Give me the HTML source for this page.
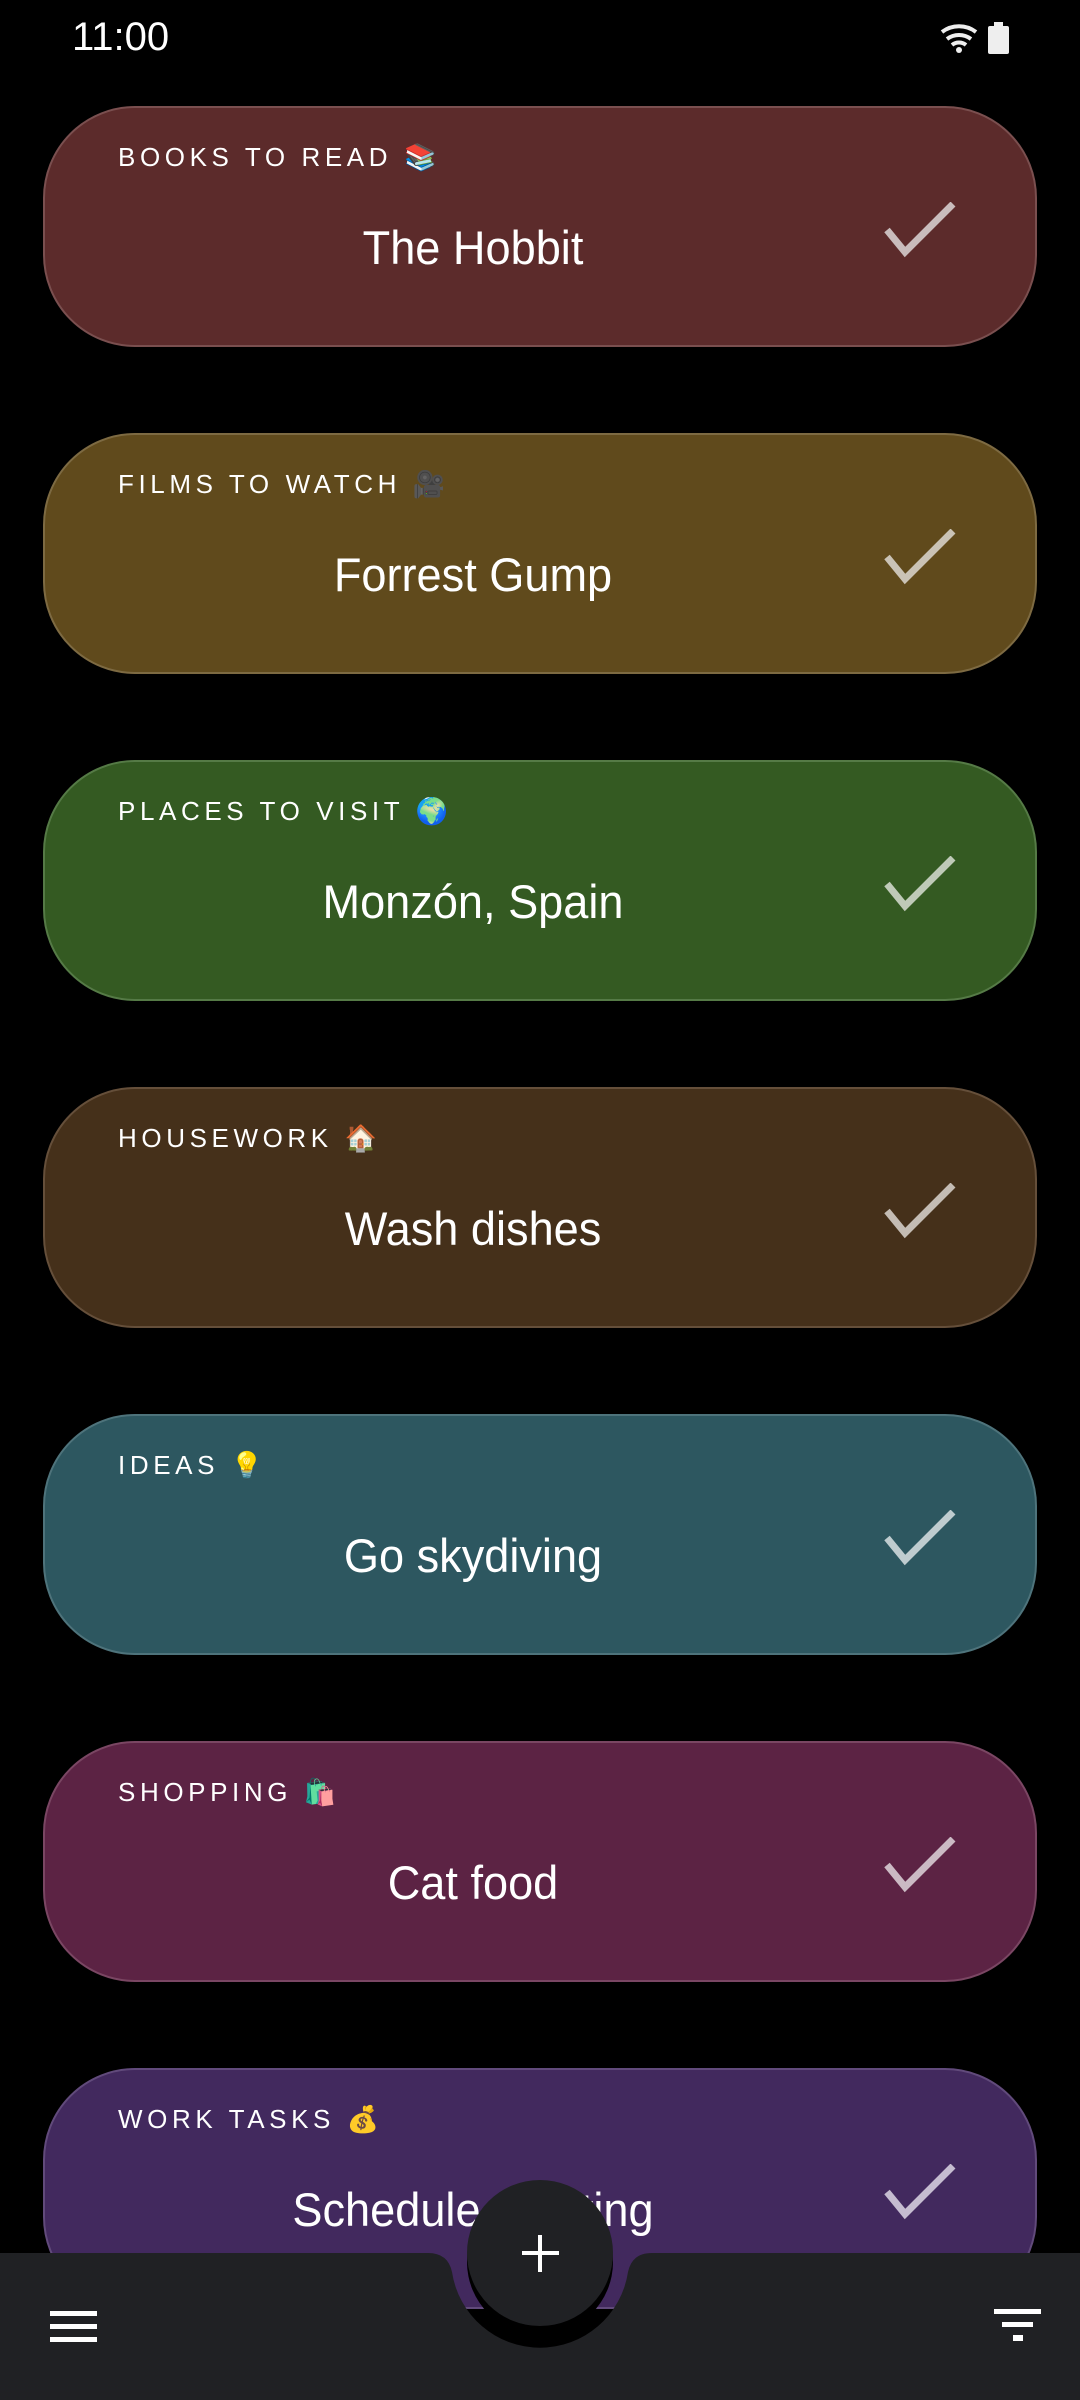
<!DOCTYPE html>
<html><head><meta charset="utf-8"><style>
html,body{margin:0;padding:0;background:#000;width:1080px;height:2400px;overflow:hidden;font-family:"Liberation Sans","Noto Sans CJK JP",sans-serif;}
.card{position:absolute;left:43px;width:994px;height:241px;border-radius:92px;box-sizing:border-box;border:2px solid;}
.lbl{position:absolute;left:73px;top:34px;font-size:26px;letter-spacing:4.6px;color:#fff;white-space:nowrap;}
.ttl{position:absolute;left:0;width:856px;text-align:center;top:112px;font-size:47px;color:#fff;white-space:nowrap;transform:scaleX(0.96);}
.chk{position:absolute;left:838px;top:94px;}
</style></head><body>
<div style="position:absolute;left:72px;top:15px;font-size:40px;color:#fff;">11:00</div>
<svg style="position:absolute;left:938px;top:20px" width="80" height="38" viewBox="0 0 80 38">
<path d="M4 12 A28 28 0 0 1 38 12" stroke="#eee" stroke-width="4" fill="none"/>
<path d="M9 19 A20 20 0 0 1 33 19" stroke="#eee" stroke-width="4" fill="none"/>
<path d="M14 25 A11 11 0 0 1 28 25" stroke="#eee" stroke-width="4" fill="none"/>
<circle cx="21" cy="30" r="3" fill="#eee"/>
<rect x="50" y="6" width="21" height="28" rx="2" fill="#eee"/><rect x="56" y="2" width="9" height="5" fill="#eee"/>
</svg>

<div class="card" style="top:106px;background:#5c2b2b;border-color:#7a4f4f"><div class="lbl">BOOKS TO READ 📚</div><div class="ttl">The Hobbit</div><svg class="chk" width="80" height="60"><path d="M4 28 L22 50 L70 2" stroke="#c9bcbc" stroke-width="7" fill="none"/></svg></div>
<div class="card" style="top:433px;background:#604a1c;border-color:#7d6a42"><div class="lbl">FILMS TO WATCH 🎥</div><div class="ttl">Forrest Gump</div><svg class="chk" width="80" height="60"><path d="M4 28 L22 50 L70 2" stroke="#cac3b6" stroke-width="7" fill="none"/></svg></div>
<div class="card" style="top:760px;background:#345a22;border-color:#557a46"><div class="lbl">PLACES TO VISIT 🌍</div><div class="ttl">Monzón, Spain</div><svg class="chk" width="80" height="60"><path d="M4 28 L22 50 L70 2" stroke="#bfcab8" stroke-width="7" fill="none"/></svg></div>
<div class="card" style="top:1087px;background:#45301a;border-color:#654f3a"><div class="lbl">HOUSEWORK 🏠</div><div class="ttl">Wash dishes</div><svg class="chk" width="80" height="60"><path d="M4 28 L22 50 L70 2" stroke="#c4bcb4" stroke-width="7" fill="none"/></svg></div>
<div class="card" style="top:1414px;background:#2d5760;border-color:#4e737b"><div class="lbl">IDEAS 💡</div><div class="ttl">Go skydiving</div><svg class="chk" width="80" height="60"><path d="M4 28 L22 50 L70 2" stroke="#bfcccf" stroke-width="7" fill="none"/></svg></div>
<div class="card" style="top:1741px;background:#5c2344;border-color:#7a4663"><div class="lbl">SHOPPING 🛍️</div><div class="ttl">Cat food</div><svg class="chk" width="80" height="60"><path d="M4 28 L22 50 L70 2" stroke="#cbbac4" stroke-width="7" fill="none"/></svg></div>
<div class="card" style="top:2068px;background:#42295e;border-color:#614a7b"><div class="lbl">WORK TASKS 💰</div><div class="ttl">Schedule meeting</div><svg class="chk" width="80" height="60"><path d="M4 28 L22 50 L70 2" stroke="#c5bcd0" stroke-width="7" fill="none"/></svg></div>

<svg style="position:absolute;left:0;top:0" width="1080" height="2400">
<path d="M0 2253 H428 Q448 2253 452 2272 A89 89 0 0 0 628 2272 Q632 2253 652 2253 H1080 V2400 H0 Z" fill="#202124"/>
<circle cx="540" cy="2262" r="73" fill="#000"/>
<circle cx="540" cy="2253" r="73" fill="#202124"/>
<rect x="522" y="2251" width="37" height="4" fill="#fff"/>
<rect x="538" y="2235" width="4" height="37" fill="#fff"/>
<rect x="50" y="2311" width="47" height="5" fill="#fff"/>
<rect x="50" y="2324" width="47" height="5" fill="#fff"/>
<rect x="50" y="2337" width="47" height="5" fill="#fff"/>
<rect x="994" y="2309" width="47" height="5" fill="#fff"/>
<rect x="1002" y="2322" width="31" height="5" fill="#fff"/>
<rect x="1013" y="2335" width="10" height="6" fill="#fff"/>
</svg>
</body></html>
